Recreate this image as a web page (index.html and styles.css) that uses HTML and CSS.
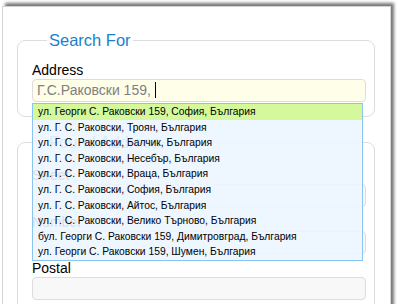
FILE: index.html
```html
<!DOCTYPE html>
<html lang="bg">
<head>
	<meta charset="UTF-8">
	<title>Search For</title>
	<link rel="stylesheet" href="styles.css">
</head>
<body>
	<div class="panel">
		<fieldset class="group">
			<legend>Search For</legend>
			<label class="field-label">Address</label>
			<div class="combo">
				<div class="text-box active">Г.С.Раковски 159, <span class="caret"></span></div>
				<ul class="suggest">
					<li class="selected">ул. Георги С. Раковски 159, София, България</li>
					<li>ул. Г. С. Раковски, Троян, България</li>
					<li>ул. Г. С. Раковски, Балчик, България</li>
					<li>ул. Г. С. Раковски, Несебър, България</li>
					<li>ул. Г. С. Раковски, Враца, България</li>
					<li>ул. Г. С. Раковски, София, България</li>
					<li>ул. Г. С. Раковски, Айтос, България</li>
					<li>ул. Г. С. Раковски, Велико Търново, България</li>
					<li>бул. Георги С. Раковски 159, Димитровград, България</li>
					<li>ул. Георги С. Раковски 159, Шумен, България</li>
				</ul>
			</div>
		</fieldset>
		<fieldset class="group found">
			<legend>Found Address</legend>
			<label class="field-label">Street</label>
			<div class="text-box"></div>
			<label class="field-label">Number</label>
			<div class="text-box"></div>
			<label class="field-label">Postal</label>
			<div class="text-box"></div>
		</fieldset>
	</div>
</body>
</html>
```

FILE: styles.css
```css
* { margin: 0; padding: 0; }
html, body { overflow: hidden; background: #fff; }
body { font-family: "Liberation Sans", Arial, sans-serif; color: #000; }

.panel { width: 389px; box-sizing: border-box; margin: 6px 0 0 2px; padding: 24px 15px 40px 14px; border: 1px solid #d4d4d4; box-shadow: 3px -3px 3px #777; background: #fff; }

.group { border: 1px solid #ddd; border-radius: 8px; padding: 5.5px 8px 14px 14px; min-width: 0; }
.group legend { margin-left: 15px; padding: 0 2px; font-size: 16.5px; line-height: 19px; color: #1a7fcc; }
.found { margin-top: 16px; padding-top: 8.5px; }

.field-label { display: block; padding-top: 6.5px; font-size: 14px; line-height: 17px; }

.text-box { width: 334px; height: 23px; box-sizing: border-box; border: 1px solid #ddd; border-radius: 4px; background: #f8f8f8; padding-left: 4px; font-size: 14px; line-height: 21px; color: #808080; white-space: pre; }
.text-box.active { background: #fefee9; }
.caret { display: inline-block; width: 1px; height: 16px; background: #000; vertical-align: -3px; }

.combo { position: relative; }
.suggest { position: absolute; left: 0; top: calc(100% + 1px); width: 331px; box-sizing: border-box; border: 1px solid #8cc4f0; background: rgba(236, 245, 255, 0.9); list-style: none; z-index: 2; }
.suggest li { padding-left: 5px; font-size: 10.3px; line-height: 15.6px; color: #000; white-space: nowrap; }
.suggest .selected { background: #d5f89c; }
```
